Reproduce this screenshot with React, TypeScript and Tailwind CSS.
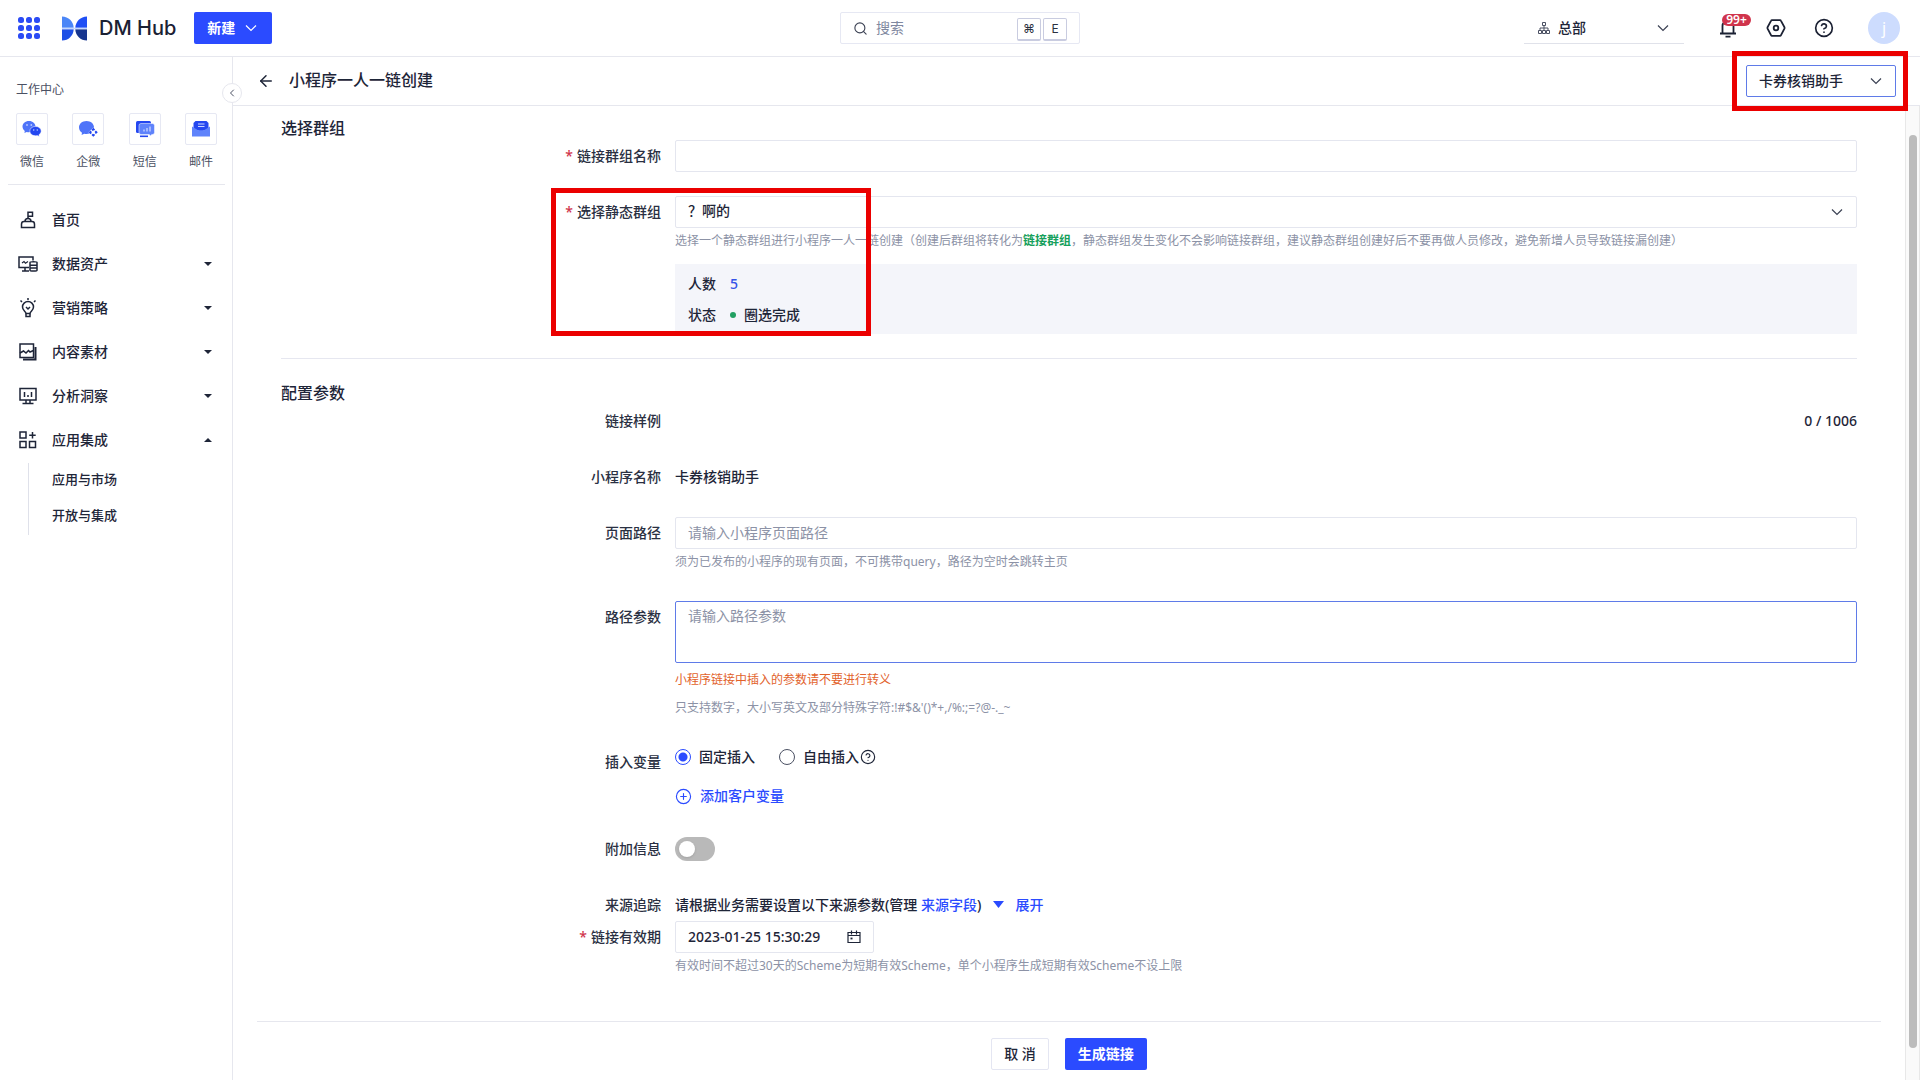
import { useState } from "react";
import type { ReactNode } from "react";
import { ArrowLeft, ChevronLeft, CircleHelp, CirclePlus, Search } from "lucide-react";

function GridIcon() {
  const spots = [3, 11, 19];
  return (
    <svg width="22" height="22" viewBox="0 0 22 22" fill="#2b4bf5">
      {spots.map((y) => spots.map((x) => <rect key={`${x}-${y}`} x={x - 3} y={y - 3} width="6" height="6" rx="2.5" />))}
    </svg>
  );
}

function Logo() {
  return (
    <svg width="25" height="25" viewBox="0 0 25 25">
      <path d="M0 0.5C6.500.5 11.500 5.500 11.700 11.800H0Z" fill="#4b86f7" />
      <path d="M25 0.5C18.500.5 13.500 5.500 13.300 11.800H25Z" fill="#1f4ff5" />
      <path d="M0 24.500C6.500 24.500 11.500 19.500 11.700 13.200H0Z" fill="#1d4fe6" />
      <path d="M25 24.500C18.500 24.500 13.500 19.500 13.300 13.200H25Z" fill="#17368f" />
      <path d="M0 11.800H25V13.200H0Z" fill="#c3d6ff" />
    </svg>
  );
}

function WechatIcon() {
  return (
    <svg width="20" height="18" viewBox="0 0 20 18">
      <path d="M7 1C3 1 .5 3.600.5 6.600c0 1.800.9 3.300 2.300 4.300L2.400 13l2.300-1.100c.7.200 1.500.3 2.300.3 3.800 0 6.500-2.500 6.500-5.600S10.800 1 7 1Z" fill="#4f74f9" />
      <circle cx="5" cy="5" r=".9" fill="#b9c9ff" />
      <circle cx="9.300" cy="5" r=".9" fill="#b9c9ff" />
      <path d="M13.500 6.400c-3.300 0-5.700 2.100-5.700 4.700s2.400 4.700 5.700 4.700c.6 0 1.200-.1 1.800-.2l2 1-.4-1.800c1.400-.9 2.300-2.200 2.300-3.700 0-2.600-2.400-4.700-5.700-4.700Z" fill="#2447f0" stroke="#fff" strokeWidth=".5" />
      <circle cx="11.700" cy="10" r=".8" fill="#b9c9ff" />
      <circle cx="15.300" cy="10" r=".8" fill="#b9c9ff" />
    </svg>
  );
}

function WecomIcon() {
  return (
    <svg width="20" height="18" viewBox="0 0 20 18">
      <path d="M8.500 1C4.200 1 1 3.800 1 7.400c0 2.200 1.200 4.200 3 5.300L3.600 15l2.700-1.300c.7.200 1.400.2 2.200.2 4.300 0 7.500-2.900 7.500-6.500S12.800 1 8.500 1Z" fill="#4f74f9" />
      <path d="M15.300 7.500 20 12.200 15.300 17 10.500 12.200Z" fill="#fff" />
      <path d="M15.300 9 18.500 12.200 15.300 15.500 12 12.200Z" fill="none" stroke="#2447f0" strokeWidth="1.800" strokeDasharray="3.400 1.150" strokeDashoffset="1.700" />
    </svg>
  );
}

function SmsIcon() {
  return (
    <svg width="20" height="18" viewBox="0 0 20 18">
      <rect x="1" y="1" width="15" height="12" rx="1.500" fill="#2447f0" />
      <path d="M6 3.500h11.500a2 2 0 0 1 2 2v7a2 2 0 0 1-2 2h-.8L15.500 16l-1.200-1.500H6a2 2 0 0 1-2-2v-7a2 2 0 0 1 2-2Z" fill="#5f83fb" stroke="#fff" strokeWidth=".5" />
      <path d="M9 9.500v2M12 8v3.500M15 6.500v5" stroke="#c9d5ff" strokeWidth="1.300" />
      <path d="M5 16.300h8" stroke="#2447f0" strokeWidth="1.600" />
    </svg>
  );
}

function MailIcon() {
  return (
    <svg width="20" height="18" viewBox="0 0 20 18">
      <path d="M4.500 1h11L17.500 3v6L10 11.500 2.500 9V3Z" fill="#2447f0" />
      <path d="M7 4h6.500M7 6.500h6.500" stroke="#c9d5ff" strokeWidth="1.100" />
      <path d="M1 6.500 7 10.200h6L19 6.500v10H1Z" fill="#5f83fb" />
    </svg>
  );
}

const strokeProps = {
  width: 20,
  height: 20,
  viewBox: "0 0 20 20",
  fill: "none",
  stroke: "#1e2538",
  strokeWidth: 1.5,
} as const;

function HomeIcon() {
  return (
    <svg {...strokeProps}>
      <path d="M10 8.500V2.200h4.500v4H10" />
      <path d="M7 11.500c0-2 1.300-3 3-3s3 1 3 3" />
      <path d="M3.500 17.500v-3.300c0-1.600 1-2.700 2.500-2.700h8c1.500 0 2.500 1.100 2.500 2.700v3.300Z" />
    </svg>
  );
}

function DataIcon() {
  return (
    <svg {...strokeProps}>
      <path d="M11 13.500H1V3h14v3.500" />
      <path d="M4 9l2-1.500 1.500 1.700L10 7.500" strokeWidth="1.200" />
      <path d="M4 17h7M7 13.500V17" />
      <path d="M12 8.500c0-1 7-1 7 0v7.700c0 1-7 1-7 0Z" />
      <path d="M12 11.200h7M12 14h7" />
    </svg>
  );
}

function BulbIcon() {
  return (
    <svg {...strokeProps}>
      <path d="M8 15.500c0-2-3.500-3-3.500-6.500a5.500 5.500 0 0 1 11 0c0 3.500-3.500 4.500-3.500 6.500Z" />
      <path d="M8 15.500v3h4v-3M8 9l2 2 2-2" />
      <path d="M10 0v2M2.500 2.500l1.500 1.500M17.500 2.500 16 4" />
    </svg>
  );
}

function MediaIcon() {
  return (
    <svg {...strokeProps}>
      <rect x="2" y="2" width="13.500" height="13.500" />
      <path d="M2 11l3.500-2 2.500 2 2.500-2.500 1.500 1.500 3.500-1.500" />
      <path d="M17.500 5v12.500H5" strokeWidth="2" />
    </svg>
  );
}

function InsightIcon() {
  return (
    <svg {...strokeProps}>
      <rect x="2" y="2.500" width="16" height="11.500" />
      <path d="M6.500 6v5M10 9v2M13.500 6v5" />
      <path d="M4.500 17.500h11M8 14v3.500M12 14v3.500" />
    </svg>
  );
}

function AppsIcon() {
  return (
    <svg {...strokeProps}>
      <rect x="2" y="2" width="6" height="6" />
      <rect x="2" y="11.500" width="6" height="6" />
      <rect x="11.500" y="11.500" width="6" height="6" />
      <path d="M14.500 2v6.500M11.200 5.200h6.500" />
    </svg>
  );
}

function OrgIcon() {
  return (
    <svg width="12" height="12" viewBox="0 0 12 12" fill="none" stroke="#4b5163">
      <path d="M4.500.5h3v3h-3ZM6 3.500V9M2 8.500V6h8v2.500" />
      <path d="M.5 8.500h3v3h-3ZM4.500 8.500h3v3h-3ZM8.500 8.500h3v3h-3Z" />
    </svg>
  );
}

function BellIcon() {
  return (
    <svg width="18" height="20" viewBox="0 0 18 20" fill="none" stroke="#1b2133" strokeWidth="1.800">
      <path d="M1 15.500h16M3.500 15.500V8a5.500 5.500 0 0 1 11 0v7.500M6.500 18.700h5" />
    </svg>
  );
}

function SettingsIcon() {
  return (
    <svg width="20" height="20" viewBox="0 0 20 20" fill="none" stroke="#1b2133" strokeWidth="1.800">
      <path d="M6 2.200h8c.5 0 .8.200 1 .6l3.400 6.400c.2.500.2 1 0 1.500L15 17.200c-.2.400-.5.700-1 .7H6c-.5 0-.8-.3-1-.7L1.600 10.700c-.2-.5-.2-1 0-1.500L5 2.800c.2-.4.500-.6 1-.6Z" />
      <circle cx="10" cy="10" r="2.300" />
    </svg>
  );
}

function CalendarIcon() {
  return (
    <svg width="14" height="14" viewBox="0 0 14 14" fill="none" stroke="#1e2538" strokeWidth="1.200">
      <path d="M1 2.500h12v10H1ZM1 5.500h3M10 5.500h3M4.500 0.500v4M9.500 0.500v4M4 5.500h6" />
      <path d="M3.500 8.500h2" strokeWidth="1.800" />
    </svg>
  );
}

function DownIcon({ className = "" }: { className?: string }) {
  return (
    <svg width="12" height="12" viewBox="0 0 12 12" fill="none" stroke="currentColor" strokeWidth="1.200" className={className}>
      <path d="M1 3.500l5 5 5-5" />
    </svg>
  );
}

function Caret({ up = false }: { up?: boolean }) {
  return (
    <svg width="8" height="4" viewBox="0 0 8 4" className="fill-[#1e2538]">
      <path d={up ? "M0 4 4 0l4 4Z" : "M0 0h8L4 4Z"} />
    </svg>
  );
}

const shortcuts = [
  { label: "微信", icon: <WechatIcon /> },
  { label: "企微", icon: <WecomIcon /> },
  { label: "短信", icon: <SmsIcon /> },
  { label: "邮件", icon: <MailIcon /> },
];

const menu = [
  { label: "首页", icon: <HomeIcon /> },
  { label: "数据资产", icon: <DataIcon />, group: true },
  { label: "营销策略", icon: <BulbIcon />, group: true },
  { label: "内容素材", icon: <MediaIcon />, group: true },
  { label: "分析洞察", icon: <InsightIcon />, group: true },
  { label: "应用集成", icon: <AppsIcon />, group: true, children: ["应用与市场", "开放与集成"] },
];

function TopBar() {
  return (
    <header className="flex h-[57px] shrink-0 items-center border-b border-[#e6e7ee] pr-5 pl-[18px]">
      <div className="flex flex-1 items-center">
        <button type="button" aria-label="应用">
          <GridIcon />
        </button>
        <a href="#" className="ml-[22px] flex items-center gap-3">
          <Logo />
          <span className="font-[Inter] text-xl leading-8 font-medium text-[#1b2133]">DM Hub</span>
        </a>
        <button type="button" className="ml-[18px] flex h-8 items-center gap-2.5 rounded-xs bg-[#2b4bff] pr-[15px] pl-[13px] font-bold text-white">
          新建
          <DownIcon />
        </button>
      </div>
      <div className="ml-0.5 flex h-8 w-60 items-center rounded-xs border border-[#e6e8f3] px-3">
        <Search className="size-[15px] shrink-0 text-[#3c4254]" strokeWidth={1.8} />
        <input
          aria-label="搜索"
          placeholder="搜索"
          className="ml-2 w-full min-w-0 flex-1 outline-none placeholder:text-[#8088a0]"
        />
        <div className="flex gap-0.5 pt-0.5 text-[#2b3040]">
          <kbd className="flex h-[23px] w-6 items-center justify-center rounded-xs border border-b-2 border-[#c9cce0] font-[Inter] text-xs">⌘</kbd>
          <kbd className="flex h-[23px] w-6 items-center justify-center rounded-xs border border-b-2 border-[#c9cce0] font-[Inter] text-xs">E</kbd>
        </div>
      </div>
      <div className="flex flex-1 items-center justify-end">
        <div className="relative flex h-8 w-40 items-center gap-2 border-b border-[#e0e2ea] pl-3.5">
          <OrgIcon />
          <select aria-label="组织" className="min-w-0 flex-1 appearance-none font-medium outline-none">
            <option>总部</option>
          </select>
          <DownIcon className="pointer-events-none absolute right-[15px] text-[#3c4254]" />
        </div>
        <button type="button" aria-label="通知" className="relative ml-[35px]">
          <BellIcon />
          <span className="absolute -top-1 left-[3px] flex h-3 w-[29px] items-center justify-center rounded-full bg-[#d0344c] font-['Noto_Sans'] text-xs font-semibold text-white">
            99+
          </span>
        </button>
        <button type="button" aria-label="设置" className="ml-[29px]">
          <SettingsIcon />
        </button>
        <button type="button" aria-label="帮助" className="ml-7">
          <CircleHelp className="size-5 text-[#1b2133]" strokeWidth={2} />
        </button>
        <button type="button" aria-label="账户" className="ml-[34px] size-8 rounded-full bg-[#cddcfe] text-base text-white">
          j
        </button>
      </div>
    </header>
  );
}

function Sidebar() {
  return (
    <aside className="relative w-[233px] shrink-0 border-r border-[#e6e7ee]">
      <button
        type="button"
        aria-label="收起"
        className="absolute top-[26px] -right-2.5 z-10 flex size-5 items-center justify-center rounded-full border border-[#e6e7ee] bg-white text-[#4b5163]"
      >
        <ChevronLeft className="size-3" strokeWidth={2} />
      </button>
      <div className="mr-[7px] ml-2 border-b border-[#e6e7ee] px-2 pt-[23px] pb-3">
        <h2 className="text-xs leading-5 text-[#4b5163]">工作中心</h2>
        <div className="mt-[13px] flex justify-between">
          {shortcuts.map((s) => (
            <a key={s.label} href="#" className="flex flex-col items-center text-xs leading-5 text-[#4b5163]">
              <span className="mb-[7px] flex size-8 items-center justify-center rounded-xs border border-[#e6e8f3]">{s.icon}</span>
              {s.label}
            </a>
          ))}
        </div>
      </div>
      <nav className="pt-[13px]">
        {menu.map((item) => (
          <div key={item.label}>
            <a href="#" className="flex h-11 items-center pr-5 pl-[18px] font-medium">
              {item.icon}
              <span className="ml-3.5 flex-1">{item.label}</span>
              {item.group && <Caret up={Boolean(item.children)} />}
            </a>
            {item.children && (
              <div className="mt-px ml-7 border-l border-[#dfe1ea] pl-[23px]">
                {item.children.map((child) => (
                  <a key={child} href="#" className="flex h-9 items-center pb-1 text-[13px] font-medium">
                    {child}
                  </a>
                ))}
              </div>
            )}
          </div>
        ))}
      </nav>
    </aside>
  );
}

type RowProps = {
  label: string;
  htmlFor?: string;
  required?: boolean;
  className?: string;
  children?: ReactNode;
};

function Row({ label, htmlFor, required, className = "mb-6", children }: RowProps) {
  return (
    <div className={`grid min-h-8 grid-cols-4 ${className}`}>
      <label htmlFor={htmlFor} className="pr-3.5 text-right leading-[31px] font-medium text-[#2a3042]">
        {required && <span className="mr-1 text-[#d0344c]">*</span>}
        {label}
      </label>
      <div className="relative col-span-3">{children}</div>
    </div>
  );
}

function Hint({ className = "text-[#8c92a6]", children }: { className?: string; children: ReactNode }) {
  return <p className={`text-xs leading-[22px] ${className}`}>{children}</p>;
}

function LinkForm() {
  const [mode, setMode] = useState("fixed");
  const [extra, setExtra] = useState(false);
  const radios = [
    { value: "fixed", label: "固定插入" },
    { value: "free", label: "自由插入" },
  ];

  return (
    <form className="flex-1 px-12 pt-2.5">
      <h2 className="text-base leading-6 font-medium">选择群组</h2>
      <Row label="链接群组名称" htmlFor="group-name" required>
        <input id="group-name" className="block h-8 w-full rounded-xs border border-[#e4e6ef] px-3 outline-none" />
      </Row>
      <Row label="选择静态群组" htmlFor="static-group" required>
        <div className="relative">
          <select id="static-group" className="block h-8 w-full appearance-none rounded-xs border border-[#e4e6ef] px-3 pb-0.5 font-medium outline-none">
            <option>？啊的</option>
          </select>
          <DownIcon className="pointer-events-none absolute top-2.5 right-3.5 text-[#3c4254]" />
        </div>
        <Hint className="mt-0.5 text-[#8c92a6]">
          选择一个静态群组进行小程序一人一链创建（创建后群组将转化为
          <span className="font-bold text-[#16a05c]">链接群组</span>
          ，静态群组发生变化不会影响链接群组，建议静态群组创建好后不要再做人员修改，避免新增人员导致链接漏创建）
        </Hint>
        <dl className="mt-3 bg-[#f4f5fa] px-[13px] py-1 leading-[31px] font-medium">
          <div className="flex">
            <dt className="w-[42px]">人数</dt>
            <dd className="text-[#3553e8]">5</dd>
          </div>
          <div className="flex">
            <dt className="w-[42px]">状态</dt>
            <dd className="flex items-center gap-2">
              <span className="size-1.5 rounded-full bg-[#22a062]" />
              圈选完成
            </dd>
          </div>
        </dl>
        <div className="pointer-events-none absolute -top-2 -left-[124px] h-[148px] w-80 border-5 border-[#eb0000]" />
      </Row>

      <h2 className="border-t border-[#e6e7f0] pt-[22px] text-base leading-6 font-medium">配置参数</h2>
      <Row label="链接样例">
        <p className="text-right leading-[31px] font-medium">0 / 1006</p>
      </Row>
      <Row label="小程序名称">
        <p className="leading-[31px] font-medium">卡券核销助手</p>
      </Row>
      <Row label="页面路径" htmlFor="page-path" className="mb-7">
        <input
          id="page-path"
          placeholder="请输入小程序页面路径"
          className="block h-8 w-full rounded-xs border border-[#e4e6ef] px-3 pb-0.5 outline-none placeholder:text-[#8c92a6]"
        />
        <Hint className="mt-0.5 text-[#8c92a6]">须为已发布的小程序的现有页面，不可携带query，路径为空时会跳转主页</Hint>
      </Row>
      <Row label="路径参数" htmlFor="path-params" className="mb-[27px]">
        <textarea
          id="path-params"
          placeholder="请输入路径参数"
          className="block h-[62px] w-full resize-none rounded-xs border border-[#5f7be8] px-3 py-[3px] leading-[22px] outline-none placeholder:text-[#8c92a6]"
        />
        <Hint className="mt-1.5 text-[#e2622b]">小程序链接中插入的参数请不要进行转义</Hint>
        <Hint className="mt-1.5 text-[#8c92a6]">{"只支持数字，大小写英文及部分特殊字符:!#$&'()*+,/%:;=?@-._~"}</Hint>
      </Row>
      <Row label="插入变量" className="mb-[26px]">
        <div className="flex h-[22px] gap-6 font-medium">
          {radios.map((r) => (
            <span key={r.value} className="flex items-center">
              <input
                type="radio"
                name="mode"
                id={r.value}
                checked={mode === r.value}
                onChange={() => setMode(r.value)}
                className="mr-2 size-4 appearance-none rounded-full border border-[#4b5163] checked:border-[#2b4bff] checked:bg-[radial-gradient(circle,#2b4bff_4px,#fff_5px)]"
              />
              <label htmlFor={r.value}>{r.label}</label>
              {r.value === "free" && <CircleHelp className="ml-px size-4" strokeWidth={1.7} />}
            </span>
          ))}
        </div>
        <button type="button" className="mt-[17px] flex h-[22px] items-center gap-2 font-medium text-[#2b4bff]">
          <CirclePlus className="size-[17px]" strokeWidth={1.6} />
          添加客户变量
        </button>
      </Row>
      <Row label="附加信息" htmlFor="extra">
        <input
          id="extra"
          type="checkbox"
          role="switch"
          checked={extra}
          onChange={(e) => setExtra(e.target.checked)}
          className="mt-1 block h-6 w-10 appearance-none rounded-full bg-[#b9b9b9] p-1 before:block before:size-4 before:rounded-full before:bg-white before:shadow-sm checked:bg-[#2b4bff] checked:before:ml-auto"
        />
      </Row>
      <Row label="来源追踪" className="mb-0">
        <div className="flex items-center leading-[31px] font-medium">
          <span>
            请根据业务需要设置以下来源参数(管理{" "}
            <a href="#" className="text-[#2b4bff]">来源字段</a>)
          </span>
          <button type="button" className="ml-3 flex items-center gap-[11px] text-[#2b4bff]">
            <svg width="11" height="7" viewBox="0 0 11 7" fill="#2b4bff">
              <path d="M0 0h11L5.500 7Z" />
            </svg>
            展开
          </button>
        </div>
      </Row>
      <Row label="链接有效期" htmlFor="expires" required className="mb-10">
        <div className="flex h-8 w-[199px] items-center rounded-xs border border-[#e4e6ef] px-3">
          <input id="expires" defaultValue="2023-01-25 15:30:29" className="min-w-0 flex-1 font-medium outline-none" />
          <CalendarIcon />
        </div>
        <Hint className="mt-0.5 text-[#8c92a6]">有效时间不超过30天的Scheme为短期有效Scheme，单个小程序生成短期有效Scheme不设上限</Hint>
      </Row>
    </form>
  );
}

export default function App() {
  return (
    <div className="flex min-h-screen flex-col bg-white font-['Noto_Sans','Noto_Sans_CJK_SC',sans-serif] text-sm text-[#1e2538]">
      <TopBar />
      <div className="flex flex-1">
        <Sidebar />
        <main className="flex min-w-0 flex-1 flex-col">
          <div className="flex h-[49px] items-center border-b border-[#e6e7ee] px-6">
            <button type="button" aria-label="返回">
              <ArrowLeft className="size-[18px]" strokeWidth={2} />
            </button>
            <h1 className="ml-3.5 flex-1 pb-0.5 text-base font-medium">小程序一人一链创建</h1>
            <div className="relative">
              <select aria-label="小程序" className="block h-8 w-[150px] appearance-none rounded-xs border border-[#5f7be8] px-3 font-medium outline-none">
                <option>卡券核销助手</option>
              </select>
              <DownIcon className="pointer-events-none absolute top-2.5 right-3.5 text-[#3c4254]" />
              <div className="pointer-events-none absolute -top-3.5 -right-3 -bottom-3.5 -left-3.5 z-10 border-5 border-[#eb0000]" />
            </div>
          </div>
          <div className="flex flex-1">
            <div className="flex min-w-0 flex-1 flex-col">
              <LinkForm />
              <div className="mx-6 flex justify-center gap-4 border-t border-[#e6e7ee] pt-4 pb-2.5">
                <button type="button" className="h-8 rounded-xs border border-[#e4e6f2] px-3 font-medium">
                  取 消
                </button>
                <button type="button" className="h-8 rounded-xs bg-[#2b4bff] px-[13px] font-bold text-white">
                  生成链接
                </button>
              </div>
            </div>
            <div className="flex w-[15px] justify-center border-x border-[#e8e8e8] bg-[#fafafa] pt-[29px] pb-8">
              <div className="w-2 rounded-full bg-[#bcbcbc]" />
            </div>
          </div>
        </main>
      </div>
    </div>
  );
}
